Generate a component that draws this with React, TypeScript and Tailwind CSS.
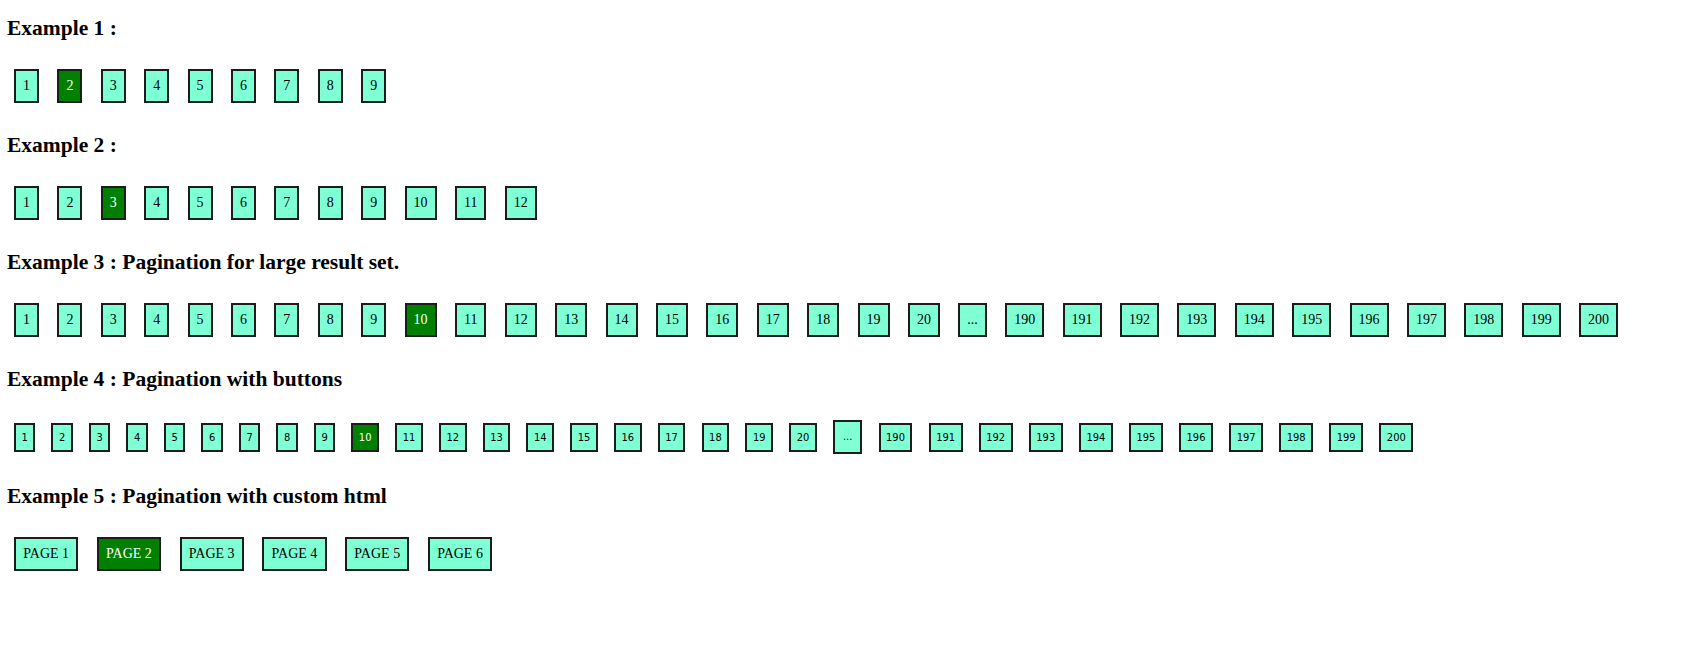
import React from 'react';
import clsx from 'clsx';

const range = (from: number, to: number) =>
  Array.from({ length: to - from + 1 }, (_, i) => String(from + i));

const largeSet = [...range(1, 20), '...', ...range(190, 200)];

const PageBox: React.FC<{ label: string; active?: boolean; wide?: boolean }> = ({
  label,
  active,
  wide,
}) => (
  <span
    className={clsx(
      'flex h-[34px] items-center border-2 border-[#1c1c1c] leading-none',
      wide ? 'px-[7.3px]' : 'px-[7px]',
      active ? 'bg-[#008000] text-white' : 'bg-[#7fffd4] text-black'
    )}
  >
    {label}
  </span>
);

const PageButton: React.FC<{ label: string; active?: boolean }> = ({ label, active }) => (
  <button
    type="button"
    className={clsx(
      'flex h-[29px] items-center border-2 border-[#1c1c1c] px-[5.5px] text-[11px] leading-none',
      active ? 'bg-[#008000] text-white' : 'bg-[#7fffd4] text-black'
    )}
    style={{ fontFamily: '"DejaVu Sans Condensed", "DejaVu Sans", sans-serif' }}
  >
    {label}
  </button>
);

const Section: React.FC<{ title: string; children: React.ReactNode; gap?: string }> = ({
  title,
  children,
  gap = 'gap-[18.4px]',
}) => (
  <section className="flex flex-col">
    <h3 className="h-[24px] text-[21.5px] font-bold leading-[24px]">{title}</h3>
    <div className={clsx('mt-[29px] flex h-[34px] items-center pl-[7px]', gap)}>{children}</div>
  </section>
);

export default function App() {
  return (
    <div
      className="flex min-h-[659px] flex-col gap-[30px] bg-white pl-[7px] pt-[16px] text-[14px] text-black"
      style={{ fontFamily: '"Liberation Serif", "Times New Roman", serif' }}
    >
      <Section title="Example 1 :">
        {range(1, 9).map((p) => (
          <PageBox key={p} label={p} active={p === '2'} />
        ))}
      </Section>

      <Section title="Example 2 :">
        {range(1, 12).map((p) => (
          <PageBox key={p} label={p} active={p === '3'} />
        ))}
      </Section>

      <Section title="Example 3 : Pagination for large result set.">
        {largeSet.map((p) => (
          <PageBox key={p} label={p} active={p === '10'} />
        ))}
      </Section>

      <Section title="Example 4 : Pagination with buttons" gap="gap-[16.2px]">
        {largeSet.map((p) =>
          p === '...' ? (
            <span
              key={p}
              className="flex h-[34px] items-center border-2 border-[#1c1c1c] bg-[#7fffd4] px-[8px] text-[11px]"
              style={{ fontFamily: '"DejaVu Sans Condensed", "DejaVu Sans", sans-serif' }}
            >
              ...
            </span>
          ) : (
            <PageButton key={p} label={p} active={p === '10'} />
          )
        )}
      </Section>

      <Section title="Example 5 : Pagination with custom html">
        {range(1, 6).map((p) => (
          <PageBox key={p} label={`PAGE ${p}`} active={p === '2'} wide />
        ))}
      </Section>
    </div>
  );
}
